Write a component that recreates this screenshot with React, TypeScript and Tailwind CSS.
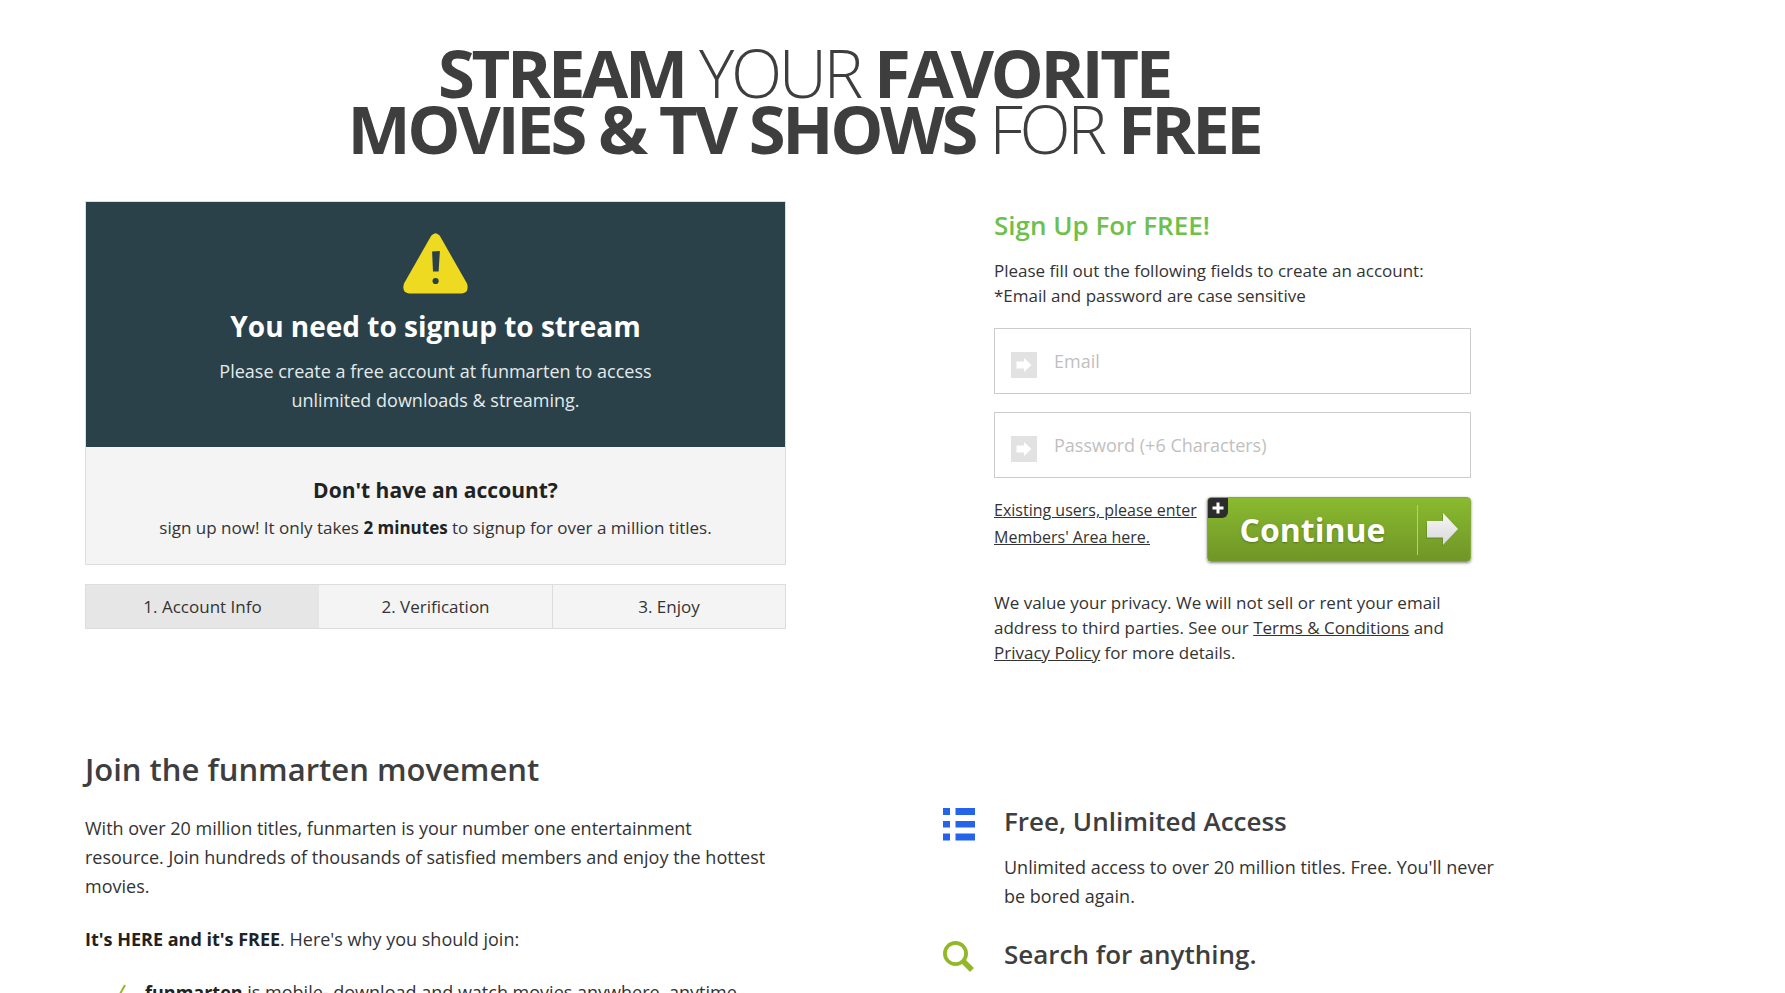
import React from "react";

const steps = ["1. Account Info", "2. Verification", "3. Enjoy"];

function WarningIcon() {
  return (
    <svg viewBox="0 0 65 61" className="h-[61px] w-[65px]" aria-hidden="true">
      <path
        d="M28.2 2.8Q32.5-2.4 36.8 2.8L64 50.5Q66.5 59.5 59 60.5H6Q-1.5 59.5 1 50.5Z"
        fill="#eeda20"
      />
      <path d="M29.1 18.6L36.9 18L35.6 38.6H30Z" fill="#2a4149" />
      <circle cx="32.6" cy="48" r="3.1" fill="#2a4149" />
    </svg>
  );
}

function FieldIcon() {
  return (
    <svg viewBox="0 0 26 26" className="mt-2 size-[26px] shrink-0" aria-hidden="true">
      <path d="M0 0H26V26H0Z" fill="#e2e2e2" />
      <path d="M5.5 9.5H13V6L20.5 13L13 20V16.5H5.5Z" fill="#fff" />
    </svg>
  );
}

function Field({ id, type, label }: { id: string; type: string; label: string }) {
  return (
    <label
      htmlFor={id}
      className="flex h-[66px] items-center gap-[17px] border border-[#cccccc] bg-white px-4"
    >
      <FieldIcon />
      <input
        id={id}
        type={type}
        aria-label={label}
        placeholder={label}
        className="min-w-0 flex-1 text-lg outline-none placeholder:text-[#bfbfbf]"
      />
    </label>
  );
}

function ListIcon() {
  return (
    <svg viewBox="0 0 32 33" className="h-[33px] w-8" fill="#2563eb" aria-hidden="true">
      <path d="M0 0H7V7H0ZM12.5 0H32V7H12.5ZM0 13H7V19.5H0ZM12.5 13H32V19.5H12.5ZM0 25.5H7V32.5H0ZM12.5 25.5H32V32.5H12.5Z" />
    </svg>
  );
}

function SearchIcon() {
  return (
    <svg viewBox="0 0 32 32" className="size-8" fill="none" stroke="#93b72a" aria-hidden="true">
      <circle cx="12.5" cy="12.5" r="10.6" strokeWidth="3.8" />
      <path d="M20.5 20.5L29 29" strokeWidth="5.5" />
    </svg>
  );
}

function Feature({ icon, title, children }: { icon: React.ReactNode; title: string; children?: React.ReactNode }) {
  return (
    <article className="grid grid-cols-[61px_1fr]">
      <div className="pt-[5px]">{icon}</div>
      <div>
        <h3 className="text-[26px] leading-9 font-semibold text-[#3e3e3e]">{title}</h3>
        {children && <p className="mt-[14px] max-w-[505px] leading-[29px]">{children}</p>}
      </div>
    </article>
  );
}

export default function App() {
  return (
    <main className="h-screen overflow-hidden bg-white pl-[85px] font-['Open_Sans',sans-serif] text-lg text-[#333333]">
      <div className="max-w-[1438px]">
        <h1 className="pt-11 text-center text-[67px] leading-[56px] font-[350] tracking-tighter text-[#3e3e3e]">
          <b className="font-bold">STREAM</b> YOUR <b className="font-bold">FAVORITE</b>
          <br />
          <b className="font-bold">MOVIES &amp; TV SHOWS</b> FOR <b className="font-bold">FREE</b>
        </h1>

        <div className="mt-[45px] flex justify-between">
          <section className="w-[701px]">
            <div className="border border-[#dddddd] bg-[#f4f4f4] text-center">
              <div className="flex flex-col items-center bg-[#2a4149] pt-[31px] pb-8 text-[#e4eaec]">
                <WarningIcon />
                <h2 className="mt-3 text-[28px] leading-10 font-bold text-white">You need to signup to stream</h2>
                <p className="mt-[11px] w-[460px] leading-[29px]">
                  Please create a free account at funmarten to access unlimited downloads &amp; streaming.
                </p>
              </div>
              <div className="pt-7 pb-6">
                <h3 className="text-[21px] leading-[30px] font-bold text-[#222222]">Don't have an account?</h3>
                <p className="mt-[11px] text-[17px] leading-6">
                  sign up now! It only takes <b className="text-[#222222]">2 minutes</b> to signup for over a million titles.
                </p>
              </div>
            </div>
            <ol className="mt-[19px] grid grid-cols-3 border border-[#dddddd] bg-[#f4f4f4] text-center text-[17px] leading-[43px]">
              {steps.map((step, i) => (
                <li
                  key={step}
                  className={i === 0 ? "bg-[#e6e6e6]" : i === 2 ? "border-l border-[#dddddd]" : ""}
                >
                  {step}
                </li>
              ))}
            </ol>
          </section>

          <form className="mr-[52px] w-[477px] pt-1.5 text-[17px] leading-[25px]" onSubmit={(e) => e.preventDefault()}>
            <h2 className="text-[26px] leading-9 font-semibold text-[#6fbf4b]">Sign Up For FREE!</h2>
            <p className="mt-[15px]">
              Please fill out the following fields to create an account:
              <br />
              *Email and password are case sensitive
            </p>
            <div className="mt-5 flex flex-col gap-[18px]">
              <Field id="email" type="email" label="Email" />
              <Field id="password" type="password" label="Password (+6 Characters)" />
            </div>
            <div className="mt-[19px] flex">
              <a href="#members" className="w-[213px] text-base leading-[27px] whitespace-nowrap underline">
                Existing users, please enter
                <br />
                Members' Area here.
              </a>
              <button
                type="submit"
                className="relative flex h-[65px] flex-1 items-center rounded-[4px] border border-[#86a93b] bg-linear-to-b from-[#8aba2f] to-[#6f9627] shadow-[0_1px_3px_#888888]"
              >
                <span className="absolute top-0 left-0 flex size-5 items-center justify-center rounded-tl-[3px] rounded-br-[6px] bg-[#2c2c2c]">
                  <svg viewBox="0 0 12 12" className="size-3" aria-hidden="true">
                    <path d="M6 0.5V11.5M0.5 6H11.5" stroke="#fff" strokeWidth="3" />
                  </svg>
                </span>
                <span className="flex-1 text-[32px] font-bold text-white [text-shadow:0_1px_2px_#55751b]">Continue</span>
                <span className="flex h-[50px] w-[53px] items-center border-l border-[#b5d36c] pl-2">
                  <svg viewBox="0 0 34 36" className="h-9 w-[34px]" aria-hidden="true">
                    <defs>
                      <linearGradient id="arrow" x1="0" y1="0" x2="0" y2="1">
                        <stop offset="0" stopColor="#f6f6f6" />
                        <stop offset="1" stopColor="#d9d9d9" />
                      </linearGradient>
                    </defs>
                    <path d="M0 10.5H16V2L31 18L16 35V27H0Z" fill="#5e7f20" opacity="0.5" />
                    <path d="M1 9H17V1L32 17L17 33V25.5H1Z" fill="url(#arrow)" />
                  </svg>
                </span>
              </button>
            </div>
            <p className="mt-7">
              We value your privacy. We will not sell or rent your email address to third parties. See our{" "}
              <a href="#terms" className="underline">Terms &amp; Conditions</a> and{" "}
              <a href="#privacy" className="underline">Privacy Policy</a> for more details.
            </p>
          </form>
        </div>

        <div className="mt-[84px] flex justify-between">
          <section className="w-[701px] leading-[29px]">
            <h2 className="text-[31px] leading-10 font-semibold text-[#3e3e3e]">Join the funmarten movement</h2>
            <p className="mt-[25px] pr-4">
              With over 20 million titles, funmarten is your number one entertainment resource. Join hundreds of
              thousands of satisfied members and enjoy the hottest movies.
            </p>
            <p className="mt-6">
              <b className="text-[#222222]">It's HERE and it's FREE</b>. Here's why you should join:
            </p>
            <ul className="mt-6">
              <li className="flex pl-7">
                <svg viewBox="0 0 14 16" className="mt-1.5 mr-[18px] h-4 w-3.5" fill="none" stroke="#93b72a" aria-hidden="true">
                  <path d="M1 10L4.5 14.5L12 1" strokeWidth="2" />
                </svg>
                <span>
                  <b className="text-[#222222]">funmarten</b> is mobile- download and watch movies anywhere, anytime.
                </span>
              </li>
            </ul>
          </section>
          <section className="flex w-[580px] flex-col gap-[25px] pt-[54px]">
            <Feature icon={<ListIcon />} title="Free, Unlimited Access">
              Unlimited access to over 20 million titles. Free. You'll never be bored again.
            </Feature>
            <Feature icon={<SearchIcon />} title="Search for anything." />
          </section>
        </div>
      </div>
    </main>
  );
}
